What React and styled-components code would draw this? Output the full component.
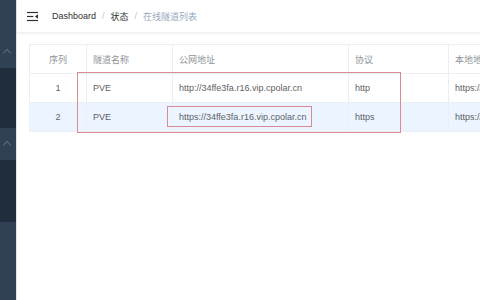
import React from 'react';
import styled, { createGlobalStyle } from 'styled-components';

const GlobalStyle = createGlobalStyle`
  html, body {
    margin: 0;
    padding: 0;
    background: #fff;
    font-family: "Liberation Sans", "Noto Sans CJK SC", sans-serif;
  }
`;

const Layout = styled.div`
  display: flex;
  width: 480px;
  height: 300px;
  overflow: hidden;
`;

const Sidebar = styled.div`
  width: 16px;
  flex-shrink: 0;
  display: flex;
  flex-direction: column;
  background: #304156;
  border-right: 1px solid #dfe3e8;
`;

const MenuBlock = styled.div`
  height: ${(p) => p.h}px;
  background: ${(p) => (p.dark ? '#1f2d3d' : '#304156')};
  position: relative;
  flex-shrink: 0;
`;

const Chevron = styled.span`
  position: absolute;
  left: 4px;
  top: ${(p) => p.top}px;
  width: 5px;
  height: 5px;
  border-left: 1px solid #5d6b7d;
  border-top: 1px solid #5d6b7d;
  transform: rotate(45deg);
`;

const Main = styled.div`
  flex: 1;
  min-width: 0;
  display: flex;
  flex-direction: column;
`;

const Navbar = styled.div`
  height: 32px;
  display: flex;
  align-items: center;
  padding-left: 10px;
  border-bottom: 1px solid #eef0f3;
  box-shadow: 0 1px 3px rgba(0, 21, 41, 0.06);
  flex-shrink: 0;
`;

const Hamburger = styled.svg`
  width: 11px;
  height: 11px;
  margin-right: 14px;
`;

const Crumb = styled.span`
  font-size: 9px;
  color: ${(p) => (p.last ? '#97a8be' : '#303133')};
`;

const Sep = styled.span`
  font-size: 9px;
  color: #c0c4cc;
  margin: 0 6px;
`;

const Content = styled.div`
  position: relative;
  padding: 11px 0 0 12px;
`;

const Table = styled.table`
  border-collapse: collapse;
  width: 560px;
  table-layout: fixed;
  font-size: 9px;
  color: #606266;
  border-top: 1px solid #ebeef5;
  border-left: 1px solid #ebeef5;
`;

const Th = styled.th`
  height: 28px;
  font-weight: normal;
  color: #909399;
  text-align: ${(p) => (p.center ? 'center' : 'left')};
  padding: 0 6px;
  border-right: 1px solid #ebeef5;
  border-bottom: 1px solid #ebeef5;
`;

const Row = styled.tr`
  background: ${(p) => (p.active ? '#ecf5ff' : '#fff')};
`;

const Td = styled.td`
  height: 28px;
  text-align: ${(p) => (p.center ? 'center' : 'left')};
  padding: 0 6px;
  border-right: 1px solid #ebeef5;
  border-bottom: 1px solid #ebeef5;
  white-space: nowrap;
  overflow: hidden;
`;

const Mark = styled.div`
  position: absolute;
  border: 1.5px solid #d98a92;
  left: ${(p) => p.x}px;
  top: ${(p) => p.y}px;
  width: ${(p) => p.w}px;
  height: ${(p) => p.h}px;
  box-sizing: border-box;
  pointer-events: none;
`;

const rows = [
  { id: 1, name: 'PVE', url: 'http://34ffe3fa.r16.vip.cpolar.cn', proto: 'http', local: 'https://localhost:8006' },
  { id: 2, name: 'PVE', url: 'https://34ffe3fa.r16.vip.cpolar.cn', proto: 'https', local: 'https://localhost:8006' },
];

export default function App() {
  return (
    <Layout>
      <GlobalStyle />
      <Sidebar>
        <MenuBlock h={68}>
          <Chevron top={50} />
        </MenuBlock>
        <MenuBlock h={60} dark />
        <MenuBlock h={32}>
          <Chevron top={14} />
        </MenuBlock>
        <MenuBlock h={62} dark />
        <MenuBlock h={78} />
      </Sidebar>
      <Main>
        <Navbar>
          <Hamburger viewBox="0 0 12 12">
            <rect x="0" y="1" width="12" height="1.3" fill="#303133" />
            <rect x="0" y="5.35" width="7" height="1.3" fill="#303133" />
            <rect x="0" y="9.7" width="12" height="1.3" fill="#303133" />
            <path d="M12 3.6 L8.7 6 L12 8.4 Z" fill="#303133" />
          </Hamburger>
          <Crumb>Dashboard</Crumb>
          <Sep>/</Sep>
          <Crumb>状态</Crumb>
          <Sep>/</Sep>
          <Crumb last>在线隧道列表</Crumb>
        </Navbar>
        <Content>
          <Table>
            <colgroup>
              <col style={{ width: 57 }} />
              <col style={{ width: 86 }} />
              <col style={{ width: 176 }} />
              <col style={{ width: 100 }} />
              <col style={{ width: 141 }} />
            </colgroup>
            <thead>
              <tr>
                <Th center>序列</Th>
                <Th>隧道名称</Th>
                <Th>公网地址</Th>
                <Th>协议</Th>
                <Th>本地地址</Th>
              </tr>
            </thead>
            <tbody>
              {rows.map((r) => (
                <Row key={r.id} active={r.id === 2}>
                  <Td center>{r.id}</Td>
                  <Td>{r.name}</Td>
                  <Td>{r.url}</Td>
                  <Td>{r.proto}</Td>
                  <Td>{r.local}</Td>
                </Row>
              ))}
            </tbody>
          </Table>
          <Mark x={60} y={39} w={324} h={61} />
          <Mark x={150} y={73} w={145} h={21} />
        </Content>
      </Main>
    </Layout>
  );
}
